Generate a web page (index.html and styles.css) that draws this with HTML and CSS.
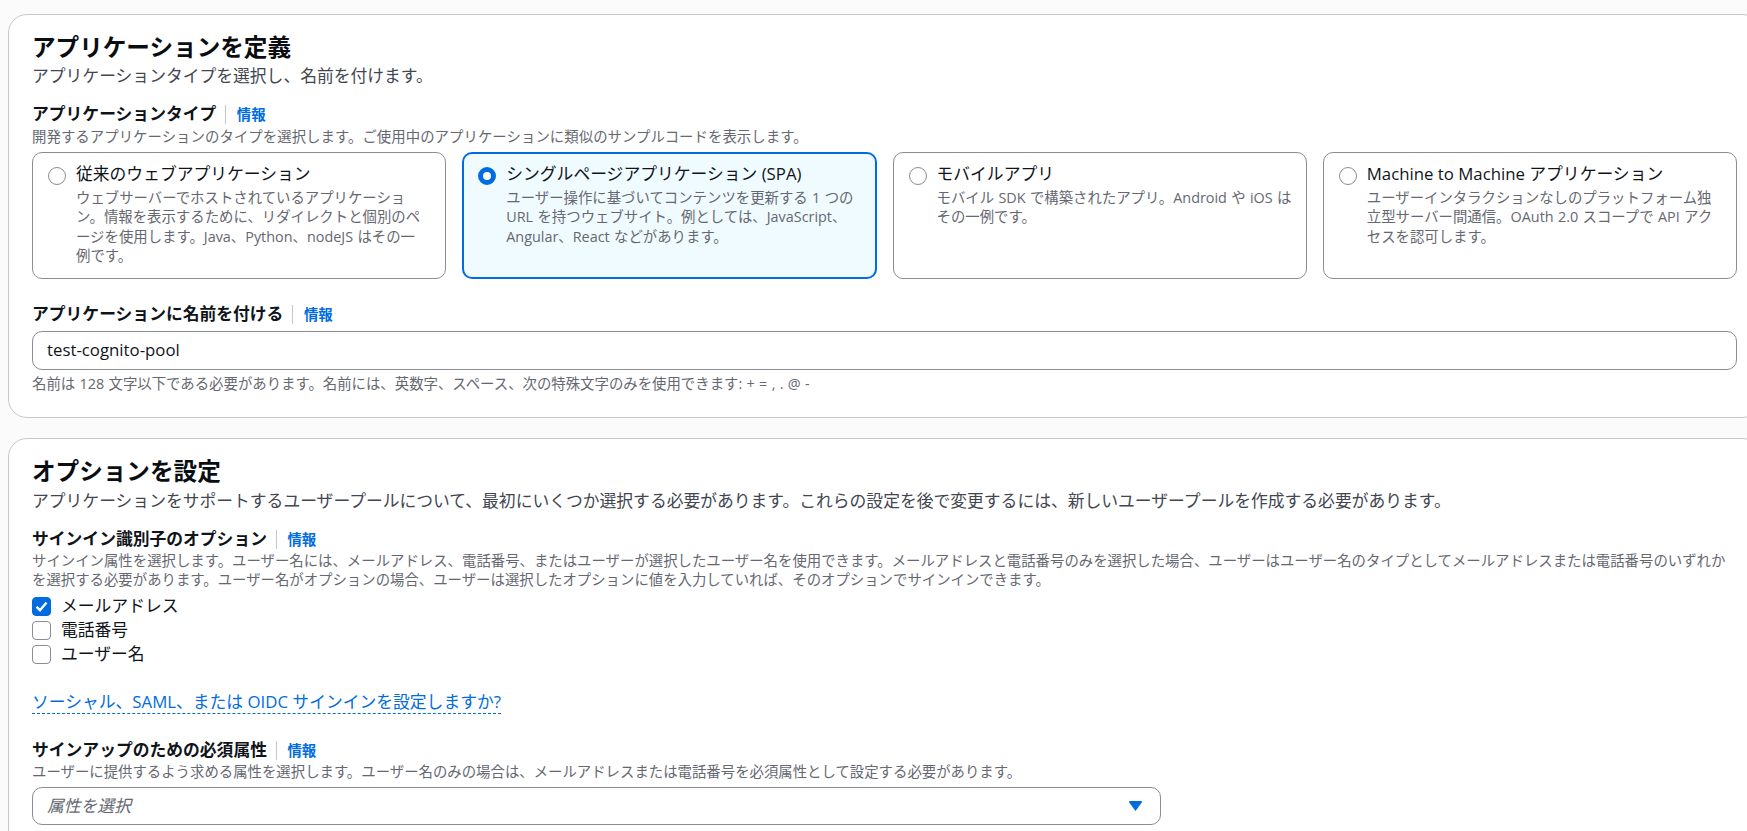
FILE: index.html
```html
<!DOCTYPE html>
<html lang="ja">
<head>
<meta charset="utf-8">
<title>アプリケーションを定義</title>
<link rel="stylesheet" href="styles.css">
</head>
<body>
<main class="page">
  <section class="panel panel-app">
    <h2 class="panel-title">アプリケーションを定義</h2>
    <p class="panel-desc">アプリケーションタイプを選択し、名前を付けます。</p>

    <div class="label-row"><span class="label">アプリケーションタイプ</span><a class="info">情報</a></div>
    <p class="hint hint-type">開発するアプリケーションのタイプを選択します。ご使用中のアプリケーションに類似のサンプルコードを表示します。</p>
    <div class="cards">
      <div class="card">
        <span class="radio"></span>
        <div class="card-body">
          <div class="card-title">従来のウェブアプリケーション</div>
          <div class="card-desc">ウェブサーバーでホストされているアプリケーション。情報を表示するために、リダイレクトと個別のページを使用します。Java、Python、nodeJS はその一<span class="nowrap">例です。</span></div>
        </div>
      </div>
      <div class="card card-on">
        <span class="radio radio-on"></span>
        <div class="card-body">
          <div class="card-title">シングルページアプリケーション (SPA)</div>
          <div class="card-desc">ユーザー操作に基づいてコンテンツを更新する 1 つの URL を持つウェブサイト。例としては、JavaScript、Angular、React などがあります。</div>
        </div>
      </div>
      <div class="card">
        <span class="radio"></span>
        <div class="card-body">
          <div class="card-title">モバイルアプリ</div>
          <div class="card-desc">モバイル SDK で構築されたアプリ。Android や iOS はその一例です。</div>
        </div>
      </div>
      <div class="card">
        <span class="radio"></span>
        <div class="card-body">
          <div class="card-title">Machine to Machine アプリケーション</div>
          <div class="card-desc">ユーザーインタラクションなしのプラットフォーム独立型サーバー間通信。OAuth 2.0 スコープで API アクセスを認可します。</div>
        </div>
      </div>
    </div>

    <div class="label-row label-name"><span class="label">アプリケーションに名前を付ける</span><a class="info">情報</a></div>
    <div class="input">test-cognito-pool</div>
    <p class="hint hint-name">名前は 128 文字以下である必要があります。名前には、英数字、スペース、次の特殊文字のみを使用できます: + = , . @ -</p>
  </section>

  <section class="panel panel-opt">
    <h2 class="panel-title">オプションを設定</h2>
    <p class="panel-desc">アプリケーションをサポートするユーザープールについて、最初にいくつか選択する必要があります。これらの設定を後で変更するには、新しいユーザープールを作成する必要があります。</p>

    <div class="label-row"><span class="label">サインイン識別子のオプション</span><a class="info">情報</a></div>
    <p class="hint">サインイン属性を選択します。ユーザー名には、メールアドレス、電話番号、またはユーザーが選択したユーザー名を使用できます。メールアドレスと電話番号のみを選択した場合、ユーザーはユーザー名のタイプとしてメールアドレスまたは電話番号のいずれかを選択する必要があります。ユーザー名がオプションの場合、ユーザーは選択したオプションに値を入力していれば、そのオプションでサインインできます。</p>
    <ul class="checks">
      <li class="check-row">
        <span class="check check-on"><svg class="check-mark" viewBox="0 0 19 19"><path d="M4.5 9.8 8 13.2 14.5 5.5" fill="none" stroke="#fff" stroke-width="2.4"/></svg></span>
        <span>メールアドレス</span>
      </li>
      <li class="check-row"><span class="check"></span><span>電話番号</span></li>
      <li class="check-row"><span class="check"></span><span>ユーザー名</span></li>
    </ul>
    <div class="link-row"><a class="dotted-link">ソーシャル、SAML、または OIDC サインインを設定しますか?</a></div>

    <div class="label-row label-signup"><span class="label">サインアップのための必須属性</span><a class="info">情報</a></div>
    <p class="hint">ユーザーに提供するよう求める属性を選択します。ユーザー名のみの場合は、メールアドレスまたは電話番号を必須属性として設定する必要があります。</p>
    <div class="select">
      <span class="placeholder">属性を選択</span>
      <svg class="caret" viewBox="0 0 13 10"><path d="M1 0H12A1 1 0 0 1 12.8 1.5L6.5 10 .2 1.5A1 1 0 0 1 1 0Z" fill="#006ce0"/></svg>
    </div>
  </section>
</main>
</body>
</html>
```
FILE: styles.css
```css
* { box-sizing: border-box; }
html, body { margin: 0; height: 100%; overflow: hidden; background: #fbfbfb; }
body {
  font-family: "Open Sans", "Noto Sans CJK JP", sans-serif;
  color: #0f141a;
  font-size: 16.8px;
  line-height: 24px;
}
.page {
  width: 1753px;
  margin-left: 8px;
  padding-top: 14px;
  display: flex;
  flex-direction: column;
  gap: 20px;
}
.panel {
  background: #fff;
  border: 1px solid #c6c6cd;
  border-radius: 19px;
  padding: 17px 23px 0;
}
.panel-app { height: 404px; }
.panel-opt { height: 480px; }
.panel-title { margin: 0; font-size: 23.6px; line-height: 30px; font-weight: 700; color: #0a0e13; }
.panel-desc { margin: 2px 0 0; font-size: 16.8px; line-height: 24px; color: #424650; }
.panel-opt .panel-desc { margin-top: 3px; }
.label-row { display: flex; align-items: center; margin-top: 14px; height: 24px; }
.label { font-size: 16.8px; font-weight: 700; line-height: 24px; }
.info {
  font-size: 14.4px;
  font-weight: 700;
  color: #006ce0;
  margin-left: 9px;
  padding-left: 10.5px;
  border-left: 1px solid #c6c6cd;
  line-height: 19px;
}
.hint { margin: 0; font-size: 14.4px; line-height: 19px; color: #656871; word-spacing: 0.6px; }
.hint-type { margin-top: 1px; letter-spacing: 0.05px; }
.cards {
  display: grid;
  grid-template-columns: repeat(4, 1fr);
  gap: 16px;
  height: 127px;
  margin-top: 6px;
}
.card {
  display: flex;
  align-items: flex-start;
  gap: 10px;
  padding: 9px 14px 9px 15px;
  border: 1px solid #8c8c94;
  border-radius: 10px;
  background: #fff;
}
.card-on {
  border: 2px solid #006ce0;
  background: #f0fbff;
  padding: 8px 13px 8px 14px;
}
.radio {
  flex: none;
  width: 18px;
  height: 18px;
  margin-top: 5px;
  border: 1px solid #8c8c94;
  border-radius: 50%;
  background: #fff;
}
.radio-on { border: 5.5px solid #006ce0; }
.card-title { font-size: 16.8px; line-height: 24px; }
.card-desc { margin-top: 2px; font-size: 14.4px; line-height: 19.3px; color: #656871; word-spacing: 0.6px; }
.nowrap { white-space: nowrap; }
.label-name { margin-top: 23px; }
.input {
  height: 39px;
  margin-top: 5px;
  padding: 0 14px;
  border: 1px solid #8c8c94;
  border-radius: 10px;
  font-size: 16.8px;
  line-height: 36px;
}
.hint-name { margin-top: 4px; }
.panel-opt .label-row { margin-top: 14px; }
.checks { list-style: none; margin: 5px 0 0; padding: 0; }
.check-row { display: flex; align-items: center; gap: 10px; height: 24px; font-size: 16.8px; }
.check {
  flex: none;
  width: 19px;
  height: 19px;
  border: 1px solid #8c8c94;
  border-radius: 4px;
  background: #fff;
}
.check-on { background: #006ce0; border-color: #006ce0; position: relative; }
.check-mark { position: absolute; inset: -1px; width: 19px; height: 19px; }
.link-row { margin-top: 24px; line-height: 24px; }
.dotted-link {
  color: #006ce0;
  font-size: 16.8px;
  border-bottom: 1.5px dashed #006ce0;
}
.panel-opt .label-signup { margin-top: 24px; }
.select {
  display: flex;
  align-items: center;
  justify-content: space-between;
  width: 1129px;
  height: 38px;
  margin-top: 6px;
  padding: 0 18px 0 14px;
  border: 1px solid #8c8c94;
  border-radius: 10px;
}
.placeholder { font-style: italic; color: #656871; }
.caret { width: 13px; height: 10px; }
```
